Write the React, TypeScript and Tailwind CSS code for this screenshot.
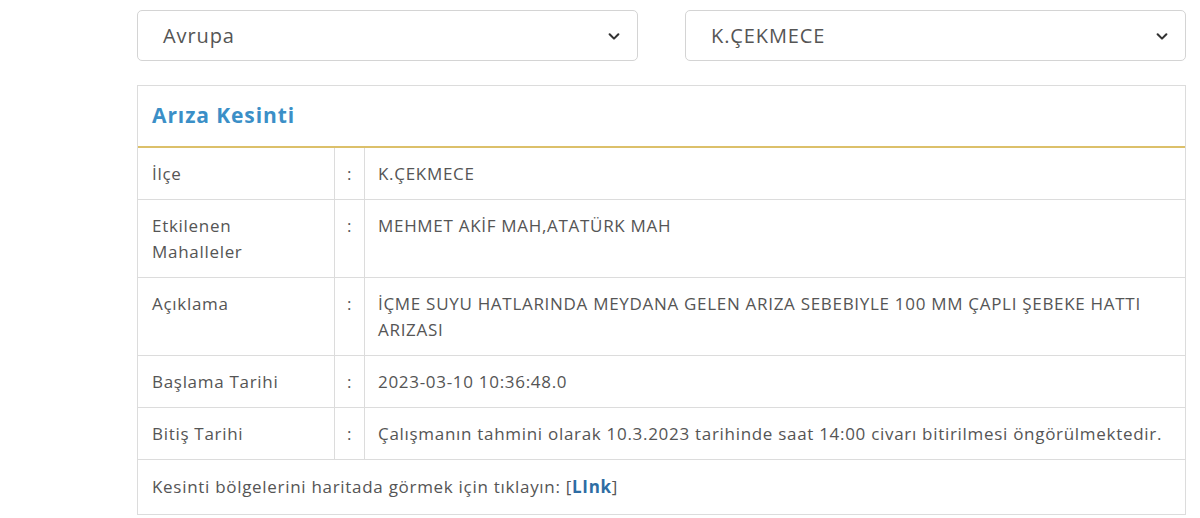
import React from 'react';

const ROWS: { label: React.ReactNode; value: React.ReactNode }[] = [
  { label: 'İlçe', value: 'K.ÇEKMECE' },
  {
    label: (
      <>
        Etkilenen
        <br />
        Mahalleler
      </>
    ),
    value: 'MEHMET AKİF MAH,ATATÜRK MAH',
  },
  {
    label: 'Açıklama',
    value: 'İÇME SUYU HATLARINDA MEYDANA GELEN ARIZA SEBEBIYLE 100 MM ÇAPLI ŞEBEKE HATTI ARIZASI',
  },
  { label: 'Başlama Tarihi', value: '2023-03-10 10:36:48.0' },
  {
    label: 'Bitiş Tarihi',
    value: 'Çalışmanın tahmini olarak 10.3.2023 tarihinde saat 14:00 civarı bitirilmesi öngörülmektedir.',
  },
];

const Chevron = () => (
  <svg width="14" height="14" viewBox="0 0 16 16" className="text-[#333]">
    <path d="M3 6l5 5 5-5" fill="none" stroke="currentColor" strokeWidth="2.4" strokeLinecap="round" strokeLinejoin="round" />
  </svg>
);

const SelectBox = ({ value }: { value: string }) => (
  <div className="h-[51px] w-[501px] rounded-[5px] border border-[#d4d4d4] bg-white flex items-center justify-between pl-[25px] pr-[16px] text-[20px] tracking-[0.9px] text-[#555]">
    <span>{value}</span>
    <Chevron />
  </div>
);

export default function App() {
  return (
    <div className="w-[1200px] h-[518px] bg-white overflow-hidden font-['Open_Sans',sans-serif]">
      <div className="ml-[137px] w-[1049px]">
        <div className="pt-[10px] flex justify-between">
          <SelectBox value="Avrupa" />
          <SelectBox value="K.ÇEKMECE" />
        </div>

        <div className="mt-[24px] border border-[#dcdcdc]">
          <div className="h-[62px] flex items-center pl-[14px] border-b-2 border-[#dcc06a]">
            <h2 className="text-[21px] font-bold text-[#3b8fc7] tracking-[0.9px]">Arıza Kesinti</h2>
          </div>
          <div className="text-[17px] tracking-[0.7px] leading-[26px] text-[#555]">
            {ROWS.map((row, i) => (
              <div key={i} className="flex border-b border-[#dcdcdc]">
                <div className="w-[197px] shrink-0 px-[14px] pt-[13px] pb-[12px] border-r border-[#dcdcdc]">{row.label}</div>
                <div className="w-[30px] shrink-0 pt-[13px] pb-[12px] text-center border-r border-[#dcdcdc]">:</div>
                <div className="flex-1 pl-[13px] pr-[12px] pt-[13px] pb-[12px]">{row.value}</div>
              </div>
            ))}
            <div className="px-[14px] py-[14px]">
              Kesinti bölgelerini haritada görmek için tıklayın: [
              <span className="font-bold text-[#2e6da4]">LInk</span>]
            </div>
          </div>
        </div>
      </div>
    </div>
  );
}
